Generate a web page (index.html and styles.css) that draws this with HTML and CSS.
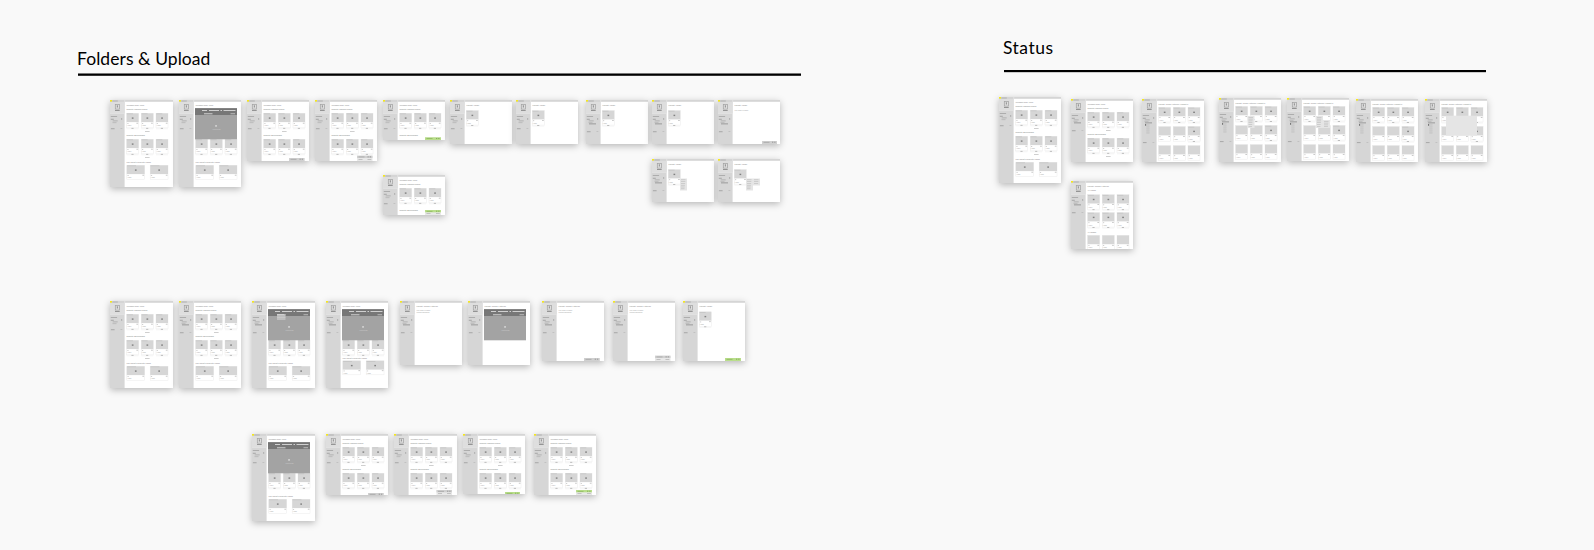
FILE: index.html
```html
<!DOCTYPE html>
<html lang="en">
<head>
<meta charset="utf-8">
<title>Flows</title>
<link rel="stylesheet" href="styles.css">
</head>
<body>
<main class="canvas">
  <section class="flow flow-folders">
    <h2 class="flow-title">Folders &amp; Upload</h2>
    <div class="flow-rule"></div>
  </section>
  <section class="flow flow-status">
    <h2 class="flow-title">Status</h2>
    <div class="flow-rule"></div>
  </section>
  <div id="boards"></div>
</main>
<script src="boards.js"></script>
</body>
</html>
```
FILE: styles.css
```css
body { margin: 0; background: #f9f9f9; overflow: hidden; }
.canvas { position: relative; width: 1594px; height: 550px; display: flex; align-items: flex-start; overflow: hidden; }
.flow { box-sizing: border-box; }
.flow-folders { width: 723px; margin-left: 78px; padding-top: 47px; }
.flow-status { width: 482px; margin-left: 203px; padding-top: 36px; }
.flow-title { margin: 0 0 0 -1px; font: 400 17.5px/24px Lato, sans-serif; color: #000; white-space: nowrap; letter-spacing: 0.06px; }
.flow-rule { height: 1px; background: #000; border-top: 1px solid #777; border-bottom: 1px solid #333; margin-top: 2px; }
.flow-status .flow-title { letter-spacing: 0.5px; }
.flow-status .flow-rule { height: 2px; margin-top: 10px; border-top: 0; border-bottom-color: #ccc; }
.board { position: absolute; display: block; background: #fff; box-shadow: 0 2px 7px rgba(0,0,0,.27); }
.board text { font-family: Lato, sans-serif; font-size: 1.9px; fill: #888; }
.board .faint { fill: #aaa; font-size: 1.6px; }
.board .light { fill: #ccc; }
```
FILE: boards.js
```js
const COLS = [16.6, 31.3, 46];
const rect = (x, y, w, h, fill, extra = '') => `<rect x="${x}" y="${y}" width="${w}" height="${h}" fill="${fill}" ${extra}/>`;
const text = (x, y, s, cls = '') => `<text x="${x}" y="${y}" class="${cls}">${s}</text>`;

function card(x, y, o = {}) {
  const w = o.w || 12, h = o.w ? 14 : 14.6;
  let s = rect(x, y, w, h, '#fff', 'stroke="#ececec" stroke-width=".5"') + rect(x, y, w, 8.8, '#d6d6d6');
  if (!o.plain) {
    s += rect(x + .3, y + .2, w * .5, .7, '#c2c2c2');
    s += rect(x + w / 2 - .8, y + 4.1, 1.7, 1.4, '#808080');
  }
  s += rect(x + .7, y + 9.8, 1.2, .7, '#bbb') + rect(x + w - 2.2, y + 9.5, 1.7, .8, '#bbb');
  s += text(x + .5, y + 13, 'Name', 'faint');
  if (!o.w && !o.plain) {
    s += rect(x, y + 14.2, w, 1.8, '#f6f6f6') + rect(x + 4.8, y + 14.6, 2.2, .8, '#b0b0b0');
  }
  return s;
}
const row = (y, plain) => COLS.map(x => card(x, y, { plain })).join('');
const wide = y => card(16.8, y, { w: 17.8 }) + card(40.2, y, { w: 17.8 });

function hero(menu) {
  let s = rect(16, 8.5, 42, 30.8, '#a3a3a3') + rect(16, 8.5, 42, 6.5, '#777') + rect(16, 8.5, 42, .6, '#666');
  [[23, 5], [30, 10], [41.5, 1.5], [44.5, 12]].forEach(b => { s += rect(b[0], 10, b[1], 1, '#d0d0d0'); });
  s += rect(25, 13, 8.5, 1.4, '#b8b8b8') + rect(51.5, 13, 4.5, 1.3, '#aaa');
  if (menu) s += rect(25, 13, 8.5, 6, '#bebebe') + rect(25, 13.4, 7, .6, '#ddd') + rect(25, 16, 8.5, .5, '#d0d0d0');
  s += rect(36.2, 25, 1.7, 1.8, '#d2d2d2') + text(33.5, 29.8, 'Placeholder', 'light faint');
  return s;
}

function popup(x, y, w, h, green, two) {
  const top = two ? Math.min(h, 2.3) : h;
  let s = rect(x, y, w, h, '#e8e8e8') + rect(x, y, w, top, green ? '#b9de8b' : '#d0d0d0');
  s += rect(x + 1.5, y + .9, 6, .7, green ? '#87b05a' : '#a0a0a0') + rect(x + w - 5, y + .7, 1.3, 1, green ? '#87b05a' : '#999') + rect(x + w - 2.8, y + .7, 1.3, 1, green ? '#87b05a' : '#999');
  if (two) s += rect(x + 1.5, y + 3.3, 4, .7, '#b0b0b0') + rect(x + w - 5, y + 3.3, 3.8, .7, '#b0b0b0');
  return s;
}
function menu(x, y, h) {
  let s = rect(x, y, 7, h, '#e5e5e5');
  for (let i = 1; i < h - 1; i += 1.8) s += rect(x + 1, y + i, 3.5 + (i % 2), .6, '#bbb');
  return s;
}

function sidebar(h, o) {
  let s = rect(0, 0, 14.6, h, '#d6d6d6') + rect(0, 2, 14.6, 11.4, '#dedede') + rect(0, 13.3, 14.6, .5, '#e9e9e9');
  s += rect(0, 0, 63, 1.8, '#d5d5d5') + rect(14.6, 0, .5, 1.8, '#eee') + rect(0, 0, 2, 1.6, '#f6e81c') + rect(2.3, .6, 5.5, .8, '#a8a8a8');
  s += rect(5.3, 4.5, 4.2, 4.6, 'none', 'stroke="#a0a0a0" stroke-width=".7"') + rect(6.8, 5.3, 1.2, 2.2, '#999');
  s += rect(5, 10.1, 4.7, .9, '#8c8c8c');
  s += rect(.8, 16.1, 6.3, .8, '#a2a2a2') + rect(.8, 18.8, 3, .9, '#a0a0a0') + rect(11, 18.3, 1.2, 1.3, '#a5a5a5');
  s += rect(2.7, 20.5, 5, .8, '#a8a8a8') + rect(2.5, 22.4, 4, .7, '#b0b0b0');
  if (o.deep) {
    s += rect(3, 23.3, 7, 1.1, '#a0a0a0');
    if (o.kind === 'grid') {
      for (let i = 0; i < 5; i++) s += rect(4.3, 25.5 + i * 2, 3.2, .9, '#bdbdbd');
      s += rect(3, 25, 1.1, 1.8, '#777');
    }
  }
  const fy = o.kind === 'grid' ? 43.2 : o.deep ? 31.3 : 28.3;
  return s + rect(.9, fy, 3.7, .9, '#a2a2a2') + rect(10.5, fy, 1.8, .7, '#b8b8b8');
}

function content(o, h) {
  const title = t => text(16.6, 6.1, t);
  const sub = (y, t) => text(16.6, y, t);
  const pager = y => rect(35, y, 4.6, .7, '#bbb');
  switch (o.kind) {
    case 'home': {
      let s = title('Welcome back, Frank') + sub(10.3, 'Recently Opened Folders') + row(13.3);
      if (h > 50) s += pager(31.2) + sub(36.2, 'Recently Downloaded') + row(39.3);
      else s += sub(36.2, 'Recently Downloaded');
      if (h > 62) s += pager(57.3);
      if (h > 80) s += sub(63.2, 'The World’s Favourite Videos') + wide(65.3);
      return s;
    }
    case 'hero': {
      const y = o.tight ? 59.8 : 65.3;
      let s = title('Welcome back, Frank') + row(39.3) + hero(o.menu);
      return s + sub(y - 2.1, 'The World’s Favourite Videos') + wide(y);
    }
    case 'heroOnly': return title('Project › Shared Materials') + hero();
    case 'single': return title('Project › Folder') + card(16.3, o.cy || 10.6);
    case 'blank': return title('Project › Shared Materials') + text(16.6, 10.2, 'This folder is empty', 'faint') + text(16.6, 12.1, 'Upload something', 'faint');
    case 'empty': return title('Project › Folder') + text(16.6, 11, 'This folder is empty', 'faint');
    case 'grid': return title('Project › Saved Materials › Project C') + row(8.5) + row(27.6, true) + card(46, 27.6) + row(46.6, true);
    case 'files': return title('Project › Shared Materials') + sub(10, 'All Videos') + row(13.7) + row(31.6) + sub(52, 'All Images') + row(54.4, true);
  }
}

const boards = [
  [110,100,63,87,{kind:'home'}], [179,100,62,87,{kind:'hero'}],
  [247,100,62,61,{kind:'home',pop:[42,58,15.5,3]}],
  [315,100,62,61,{kind:'home',pop:[42,55.7,15.5,5.3,0,1]}],
  [383,100,62,40,{kind:'home',pop:[42,37.3,16,2.7,1]}],
  [450,100,62,44,{kind:'single'}], [516,100,62,44,{kind:'single'}],
  [586,100,62,44,{kind:'single',deep:1}], [652,100,62,44,{kind:'single',deep:1}],
  [718,100,62,44,{kind:'empty',deep:1,pop:[44,41,15,3]}],
  [383,175,62,40,{kind:'home',pop:[42,35,16,5,1,1]}],
  [652,159,62,43,{kind:'single',deep:1,menus:[[28,19.5,12]]}],
  [718,159,62,43,{kind:'single',deep:1,menus:[[28,19.5,12],[35,19.5,7]]}],
  [110,301,63,87,{kind:'home'}], [179,301,62,87,{kind:'home',deep:1}],
  [252,301,63,87,{kind:'hero',menu:1,deep:1}], [326,301,62,87,{kind:'hero',tight:1,deep:1}],
  [400,301,62,64,{kind:'blank',deep:1}], [468,301,62,64,{kind:'heroOnly',deep:1}],
  [542,301,62,60,{kind:'blank',deep:1,pop:[42,57,15.7,3]}],
  [613,301,62,60,{kind:'blank',deep:1,pop:[42,54.7,15.5,5.3,0,1]}],
  [683,301,62,60,{kind:'single',deep:1,cy:10.8,pop:[42,57,16,3,1]}],
  [252,434,63,87,{kind:'hero'}],
  [326,434,62,61,{kind:'home',pop:[42,59,15.7,2]}],
  [394,434,63,61,{kind:'home',pop:[42.5,56,15.5,5,0,1]}],
  [463,434,62,60,{kind:'home',pop:[42,58,15,2,1]}],
  [534,434,62,61,{kind:'home',pop:[42,56,16,5,1,1]}],
  [999,97,62,86,{kind:'home'}], [1071,99,62,63,{kind:'home',deep:1}],
  [1142,99,62,63,{kind:'grid',deep:1}],
  [1219,98,62,64,{kind:'grid',deep:1,menus:[[28.5,18,12]]}],
  [1287,98,62,63,{kind:'grid',deep:1,menus:[[29,18,12],[36,22,8]]}],
  [1356,99,62,63,{kind:'grid',deep:1}], [1425,99,62,63,{kind:'grid',deep:1,modal:1}],
  [1071,181,62,68,{kind:'files',deep:1}]
];

document.getElementById('boards').innerHTML = boards.map(([x, y, w, h, o]) => {
  let s = content(o, h) + sidebar(h, o);
  if (o.pop) s += popup(...o.pop);
  (o.menus || []).forEach(m => { s += menu(...m); });
  if (o.modal) s += rect(21, 16.7, 31, 20, '#e5e5e5');
  return `<svg class="board" style="left:${x}px;top:${y}px" width="${w}" height="${h}" viewBox="0 0 ${w} ${h}">${s}</svg>`;
}).join('');
```
